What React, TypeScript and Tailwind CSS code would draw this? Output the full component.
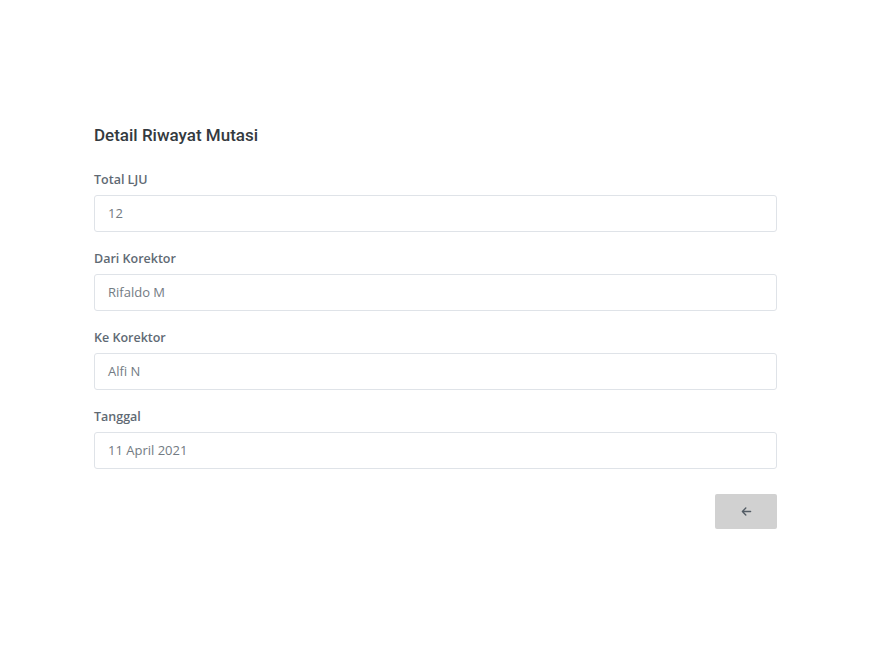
export default function App() {
  const fields = [
    { label: "Total LJU", value: "12" },
    { label: "Dari Korektor", value: "Rifaldo M" },
    { label: "Ke Korektor", value: "Alfi N" },
    { label: "Tanggal", value: "11 April 2021" },
  ]

  return (
    <div className="min-h-[647px] w-full bg-white" style={{ fontFamily: '"Open Sans", sans-serif' }}>
      <div className="ml-[94px] w-[683px] pt-[125px]">
        <h1 className="mb-[26px] text-[17px] font-medium leading-5 text-[#343a40] [font-family:Roboto,sans-serif]">
          Detail Riwayat Mutasi
        </h1>

        {fields.map((f) => (
          <div key={f.label} className="mb-[18px]">
            <label className="mb-[6px] block text-[12.5px] font-semibold leading-[18px] text-[#5f6a74]">
              {f.label}
            </label>
            <div className="flex h-[37px] items-center rounded-[3px] border border-[#dfe3e8] px-[13px] text-[13px] text-[#737b83]">
              {f.value}
            </div>
          </div>
        ))}

        <div className="mt-[25px] flex justify-end">
          <button className="flex h-[35px] w-[62px] items-center justify-center rounded-[2px] bg-[#d1d1d1]">
            <svg width="11" height="11" viewBox="0 0 448 512" fill="#535c65">
              <path d="M9.4 233.4c-12.5 12.5-12.5 32.8 0 45.3l160 160c12.5 12.5 32.8 12.5 45.3 0s12.5-32.8 0-45.3L109.2 288H416c17.7 0 32-14.3 32-32s-14.3-32-32-32H109.3L214.6 118.6c12.5-12.5 12.5-32.8 0-45.3s-32.8-12.5-45.3 0l-160 160z" />
            </svg>
          </button>
        </div>
      </div>
    </div>
  )
}
